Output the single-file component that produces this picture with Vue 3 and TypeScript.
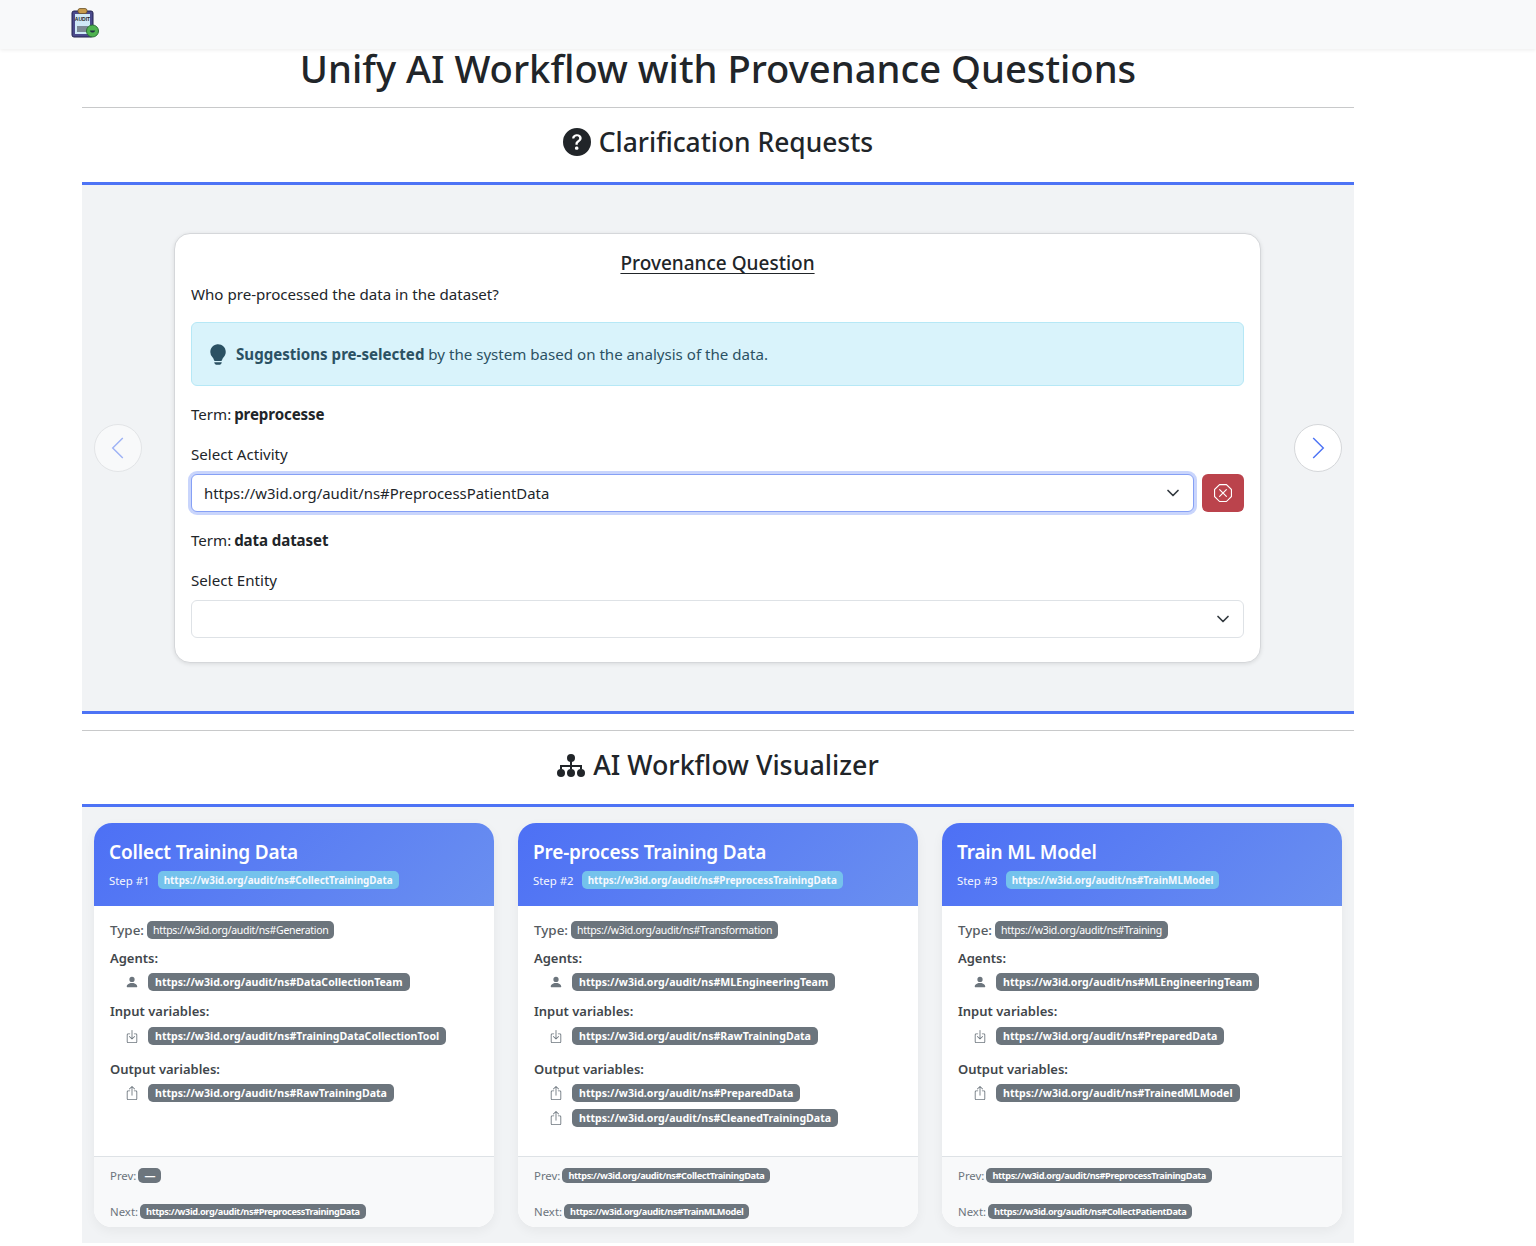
<script setup lang="ts">
type Step = {
  title: string
  uri: string
  type: string
  agents: string[]
  inputs: string[]
  outputs: string[]
  prev: string
  next: string
}

const ns = 'https://w3id.org/audit/ns#'

const steps: Step[] = [
  {
    title: 'Collect Training Data',
    uri: 'CollectTrainingData',
    type: 'Generation',
    agents: ['DataCollectionTeam'],
    inputs: ['TrainingDataCollectionTool'],
    outputs: ['RawTrainingData'],
    prev: '',
    next: 'PreprocessTrainingData',
  },
  {
    title: 'Pre-process Training Data',
    uri: 'PreprocessTrainingData',
    type: 'Transformation',
    agents: ['MLEngineeringTeam'],
    inputs: ['RawTrainingData'],
    outputs: ['PreparedData', 'CleanedTrainingData'],
    prev: 'CollectTrainingData',
    next: 'TrainMLModel',
  },
  {
    title: 'Train ML Model',
    uri: 'TrainMLModel',
    type: 'Training',
    agents: ['MLEngineeringTeam'],
    inputs: ['PreparedData'],
    outputs: ['TrainedMLModel'],
    prev: 'PreprocessTrainingData',
    next: 'CollectPatientData',
  },
]
</script>

<template>
  <nav class="navbar">
    <svg class="logo" viewBox="0 0 28 31" width="28" height="31">
      <rect x="1" y="4" width="21" height="26" rx="2" fill="#4b4a8c" stroke="#23234f" />
      <rect x="4" y="7" width="15" height="20" fill="#cfe9f7" />
      <rect x="7" y="1.500" width="9" height="5" rx="2" fill="#c79a4b" stroke="#6b5428" stroke-width="0.800" />
      <text x="11.500" y="14" font-size="5" font-weight="700" text-anchor="middle" fill="#222" font-family="Liberation Sans, sans-serif">AUDIT</text>
      <rect x="6" y="19" width="11" height="6" fill="#7d8a96" />
      <circle cx="21.500" cy="24" r="6" fill="#4fb34f" stroke="#2a6f35" />
      <path d="M18.800 23.500c.8 2.800 4.600 2.800 5.400 0z" fill="#234" />
    </svg>
  </nav>

  <main class="page">
    <h1 class="title">Unify AI Workflow with Provenance Questions</h1>
    <hr class="rule rule-first" />

    <h2 class="heading heading-first">
      <svg width="28" height="28" viewBox="0 0 16 16" fill="currentColor">
        <path d="M16 8A8 8 0 1 1 0 8a8 8 0 0 1 16 0zM5.496 6.033h.825c.138 0 .248-.113.266-.25.09-.656.54-1.134 1.342-1.134.686 0 1.314.343 1.314 1.168 0 .635-.374.927-.965 1.371-.673.489-1.206 1.06-1.168 1.987l.003.217a.25.25 0 0 0 .25.246h.811a.25.25 0 0 0 .25-.25v-.105c0-.718.273-.927 1.01-1.486.609-.463 1.244-.977 1.244-2.056 0-1.511-1.276-2.241-2.673-2.241-1.267 0-2.655.59-2.75 2.286a.237.237 0 0 0 .241.247zm2.325 6.443c.61 0 1.029-.394 1.029-.927 0-.552-.42-.94-1.029-.94-.584 0-1.009.388-1.009.94 0 .533.425.927 1.01.927z" />
      </svg>
      Clarification Requests
    </h2>

    <section class="carousel">
      <button class="arrow arrow-off" type="button" aria-label="Previous">
        <svg width="24" height="24" viewBox="0 0 24 24" fill="none" stroke="#4d73f5" stroke-width="1.500">
          <path d="M17 1.500 6.500 12 17 22.500" transform="scale(0.96) translate(0.500 0.500)" />
        </svg>
      </button>

      <div class="question">
        <h3 class="question-title">Provenance Question</h3>
        <p class="question-text">Who pre-processed the data in the dataset?</p>

        <div class="alert">
          <svg width="18" height="21" viewBox="1 0 14 16" fill="currentColor">
            <path d="M2 6a6 6 0 1 1 10.174 4.31c-.203.196-.359.4-.453.619l-.762 1.769A.5.5 0 0 1 10.500 13h-5a.5.5 0 0 1-.46-.302l-.761-1.77a1.964 1.964 0 0 0-.453-.618A5.984 5.984 0 0 1 2 6zm3 8.500a.5.5 0 0 1 .5-.5h5a.5.5 0 0 1 0 1l-.224.447a1 1 0 0 1-.894.553H6.618a1 1 0 0 1-.894-.553L5.500 15a.5.5 0 0 1-.5-.5z" />
          </svg>
          <span><strong>Suggestions pre-selected</strong> by the system based on the analysis of the data.</span>
        </div>

        <p class="term">Term: <strong>preprocesse</strong></p>
        <p class="field-label">Select Activity</p>
        <div class="select-row">
          <div class="select select-focus">
            <span>https://w3id.org/audit/ns#PreprocessPatientData</span>
            <svg width="16" height="16" viewBox="0 0 16 16" fill="none" stroke="#343a40" stroke-width="1.700" stroke-linecap="round" stroke-linejoin="round">
              <path d="m3 5.500 5 5 5-5" />
            </svg>
          </div>
          <button class="clear" type="button" aria-label="Clear">
            <svg width="18" height="18" viewBox="0 0 16 16" fill="currentColor">
              <path d="M4.540.146A.5.5 0 0 1 4.893 0h6.214a.5.5 0 0 1 .353.146l4.394 4.394a.5.5 0 0 1 .146.353v6.214a.5.5 0 0 1-.146.353l-4.394 4.394a.5.5 0 0 1-.353.146H4.893a.5.5 0 0 1-.353-.146L.146 11.460A.5.5 0 0 1 0 11.107V4.893a.5.5 0 0 1 .146-.353L4.540.146zM5.100 1 1 5.100v5.800L5.100 15h5.800l4.100-4.100V5.100L10.900 1H5.100z" />
              <path d="M4.646 4.646a.5.5 0 0 1 .708 0L8 7.293l2.646-2.647a.5.5 0 0 1 .708.708L8.707 8l2.647 2.646a.5.5 0 0 1-.708.708L8 8.707l-2.646 2.647a.5.5 0 0 1-.708-.708L7.293 8 4.646 5.354a.5.5 0 0 1 0-.708z" />
            </svg>
          </button>
        </div>

        <p class="term">Term: <strong>data dataset</strong></p>
        <p class="field-label">Select Entity</p>
        <div class="select">
          <span></span>
          <svg width="16" height="16" viewBox="0 0 16 16" fill="none" stroke="#343a40" stroke-width="1.700" stroke-linecap="round" stroke-linejoin="round">
            <path d="m3 5.500 5 5 5-5" />
          </svg>
        </div>
      </div>

      <button class="arrow" type="button" aria-label="Next">
        <svg width="24" height="24" viewBox="0 0 24 24" fill="none" stroke="#4d73f5" stroke-width="1.500">
          <path d="M7 1.500 17.500 12 7 22.500" transform="scale(0.96) translate(0.500 0.500)" />
        </svg>
      </button>
    </section>

    <hr class="rule rule-second" />

    <h2 class="heading heading-second">
      <svg width="28" height="23" viewBox="0 0 28 23" fill="currentColor">
        <circle cx="14" cy="4" r="4" />
        <circle cx="4" cy="19" r="4" />
        <circle cx="14" cy="19" r="4" />
        <circle cx="24" cy="19" r="4" />
        <path d="M13 7h2v4h10v4h-2v-2H15v2h-2v-2H5v2H3v-4h10z" />
      </svg>
      AI Workflow Visualizer
    </h2>

    <section class="workflow">
      <article v-for="(step, i) in steps" :key="step.uri" class="step">
        <header class="step-head">
          <h4 class="step-title">{{ step.title }}</h4>
          <div class="step-sub">
            <span>Step #{{ i + 1 }}</span>
            <span class="pill pill-info">{{ ns + step.uri }}</span>
          </div>
        </header>

        <div class="step-body">
          <div class="type-row">
            <span class="type-label">Type:</span>
            <span class="pill pill-type">{{ ns + step.type }}</span>
          </div>

          <div class="group-label group-agents">Agents:</div>
          <div v-for="a in step.agents" :key="a" class="item">
            <svg width="14" height="14" viewBox="0 0 16 16" fill="#6c757d">
              <path d="M3 14s-1 0-1-1 1-4 6-4 6 3 6 4-1 1-1 1H3Zm5-6a3 3 0 1 0 0-6 3 3 0 0 0 0 6Z" />
            </svg>
            <span class="pill">{{ ns + a }}</span>
          </div>

          <div class="group-label group-inputs">Input variables:</div>
          <div v-for="v in step.inputs" :key="v" class="item item-in">
            <svg width="14" height="14" viewBox="0 0 16 16" fill="#6c757d">
              <path d="M3.500 6a.5.5 0 0 0-.5.5v8a.5.5 0 0 0 .5.5h9a.5.5 0 0 0 .5-.5v-8a.5.5 0 0 0-.5-.5h-2a.5.5 0 0 1 0-1h2A1.500 1.500 0 0 1 14 6.500v8a1.500 1.500 0 0 1-1.500 1.500h-9A1.500 1.500 0 0 1 2 14.500v-8A1.500 1.500 0 0 1 3.500 5h2a.5.5 0 0 1 0 1h-2z" />
              <path d="M7.646 11.854a.5.5 0 0 0 .708 0l3-3a.5.5 0 0 0-.708-.708L8.500 10.293V1.500a.5.5 0 0 0-1 0v8.793L5.354 8.146a.5.5 0 1 0-.708.708l3 3z" />
            </svg>
            <span class="pill">{{ ns + v }}</span>
          </div>

          <div class="group-label group-outputs">Output variables:</div>
          <div v-for="v in step.outputs" :key="v" class="item item-out">
            <svg width="14" height="14" viewBox="0 0 16 16" fill="#6c757d">
              <path d="M3.500 6a.5.5 0 0 0-.5.5v8a.5.5 0 0 0 .5.5h9a.5.5 0 0 0 .5-.5v-8a.5.5 0 0 0-.5-.5h-2a.5.5 0 0 1 0-1h2A1.500 1.500 0 0 1 14 6.500v8a1.500 1.500 0 0 1-1.500 1.500h-9A1.500 1.500 0 0 1 2 14.500v-8A1.500 1.500 0 0 1 3.500 5h2a.5.5 0 0 1 0 1h-2z" />
              <path d="M7.646.146a.5.5 0 0 1 .708 0l3 3a.5.5 0 0 1-.708.708L8.500 1.707V10.500a.5.5 0 0 1-1 0V1.707L5.354 3.854a.5.5 0 1 1-.708-.708l3-3z" />
            </svg>
            <span class="pill">{{ ns + v }}</span>
          </div>
        </div>

        <footer class="step-foot">
          <div class="foot-row">
            <span>Prev:</span>
            <span class="pill pill-small" :class="{ 'pill-empty': !step.prev }">{{ step.prev ? ns + step.prev : '—' }}</span>
          </div>
          <div class="foot-row">
            <span>Next:</span>
            <span class="pill pill-small">{{ ns + step.next }}</span>
          </div>
        </footer>
      </article>
    </section>
  </main>
</template>

<style>
body {
  background: #fff;
}
</style>

<style scoped>
* {
  box-sizing: border-box;
}

.navbar,
.page {
  font-family: 'Noto Sans', 'Open Sans', sans-serif;
  color: #212529;
}

.navbar {
  height: 49px;
  padding: 7px 0 0 71px;
  background: #f8f9fa;
  box-shadow: 0 1px 4px rgba(0, 0, 0, 0.08);
}

.logo {
  display: block;
}

.page {
  width: 1272px;
  margin-left: 82px;
}

.title {
  margin: 0;
  font-size: 38.200px;
  line-height: 38px;
  font-weight: 500;
  text-align: center;
}

.rule {
  margin: 0;
  border: 0;
  border-top: 1px solid #c8c9ca;
}

.rule-first {
  margin-top: 20px;
}

.rule-second {
  margin-top: 16px;
}

.heading {
  display: flex;
  align-items: center;
  justify-content: center;
  gap: 8px;
  margin: 0;
  line-height: 34px;
  font-weight: 500;
  border-bottom: 3px solid #4d73f5;
}

.heading-first {
  padding: 17px 0 23px;
  font-size: 26.400px;
}

.heading-second {
  padding: 17px 0 22px;
  font-size: 26.800px;
}

.carousel {
  display: grid;
  grid-template-columns: 48px 1fr 48px;
  column-gap: 32px;
  align-items: center;
  padding: 48px 12px;
  background: #f1f3f5;
  border-bottom: 3px solid #4d73f5;
}

.arrow {
  display: flex;
  align-items: center;
  justify-content: center;
  width: 48px;
  height: 48px;
  padding: 0;
  background: #fff;
  border: 1px solid #d5d7da;
  border-radius: 50%;
}

.arrow-off {
  opacity: 0.5;
}

.question {
  height: 430px;
  margin-right: 1px;
  padding: 16px 16px 0;
  font-size: 15.100px;
  background: #fff;
  border: 1px solid #d5d7da;
  border-radius: 16px;
  box-shadow: 0 1px 4px rgba(0, 0, 0, 0.1);
}

.question-title {
  margin: 0;
  font-size: 19px;
  line-height: 26px;
  font-weight: 500;
  text-align: center;
  text-decoration: underline;
  text-underline-offset: 3px;
}

.question-text {
  margin: 6px 0 0;
  line-height: 24px;
}

.alert {
  display: flex;
  align-items: center;
  gap: 9px;
  height: 64px;
  margin-top: 16px;
  padding: 0 17px;
  color: #2b5163;
  background: #d9f3fb;
  border: 1px solid #b6e8f6;
  border-radius: 6px;
}

.term {
  margin: 16px 0 0;
  line-height: 24px;
}

.term strong {
  margin-left: -1px;
  letter-spacing: -0.1px;
}

.field-label {
  margin: 16px 0 8px;
  line-height: 24px;
}

.select-row {
  display: flex;
  gap: 8px;
}

.select {
  display: flex;
  flex: 1;
  align-items: center;
  justify-content: space-between;
  height: 38px;
  padding: 0 12px;
  font-size: 14.900px;
  background: #fff;
  border: 1px solid #dee2e6;
  border-radius: 6px;
}

.select-focus {
  border-color: #86a0f5;
  box-shadow: 0 0 0 3px rgba(77, 115, 245, 0.3);
}

.clear {
  display: flex;
  flex: none;
  align-items: center;
  justify-content: center;
  width: 42px;
  height: 38px;
  padding: 0;
  color: #fff;
  background: #bb434c;
  border: 0;
  border-radius: 6px;
}

.workflow {
  display: grid;
  grid-template-columns: repeat(3, 400px);
  column-gap: 24px;
  padding: 16px 12px;
  background: #f1f3f5;
}

.step {
  display: flex;
  flex-direction: column;
  height: 404px;
  overflow: hidden;
  background: #fff;
  border-radius: 18px;
  box-shadow: 0 4px 12px rgba(0, 0, 0, 0.05);
}

.step-head {
  height: 83px;
  padding: 15px 15px 0;
  color: #fff;
  background: linear-gradient(135deg, #4d70f5, #6a8ff0);
}

.step-title {
  margin: 0;
  font-size: 19px;
  line-height: 28px;
  font-weight: 600;
  letter-spacing: -0.16px;
}

.step-sub {
  display: flex;
  align-items: center;
  gap: 9px;
  height: 18px;
  margin-top: 5px;
  font-size: 11.400px;
  line-height: 17px;
  opacity: 0.95;
}

.pill {
  display: inline-block;
  height: 18px;
  padding: 0 7px;
  font-size: 10.600px;
  line-height: 18px;
  font-weight: 700;
  color: #fff;
  white-space: nowrap;
  background: #6c757d;
  border-radius: 5px;
}

.pill-info {
  padding: 0 6px;
  margin-left: -1px;
  font-size: 9.900px;
  background: #76c6ec;
}

.pill-type {
  padding: 0 6px;
  margin-left: -1px;
  font-size: 10.500px;
  font-weight: 400;
  letter-spacing: -0.3px;
}

.pill-small {
  height: 15px;
  padding: 0 6px;
  margin-left: -1px;
  font-size: 9.200px;
  line-height: 15px;
  letter-spacing: -0.38px;
}

.pill-empty {
  min-width: 21px;
  font-size: 11px;
  text-align: center;
}

.step-body {
  flex: 1;
  padding: 15px 15px 0 16px;
  color: #555b61;
}

.type-row {
  display: flex;
  align-items: center;
  gap: 4px;
  height: 18px;
  font-size: 13.400px;
  font-weight: 500;
}

.group-label {
  height: 20px;
  font-size: 13px;
  line-height: 20px;
  font-weight: 600;
  color: #41464b;
}

.group-agents {
  margin-top: 9px;
}

.group-inputs {
  margin-top: 10px;
}

.group-outputs {
  margin-top: 14px;
}

.item {
  display: flex;
  align-items: center;
  gap: 9px;
  height: 18px;
  margin-top: 5px;
  padding-left: 15px;
}

.item-in {
  margin-top: 6px;
}

.item-out + .item-out {
  margin-top: 7px;
}

.step-foot {
  height: 71px;
  padding: 9px 15px 0 16px;
  font-size: 11.400px;
  color: #6c757d;
  background: #f8f9fa;
  border-top: 1px solid #dee2e6;
}

.foot-row {
  display: flex;
  align-items: center;
  gap: 3px;
  height: 18px;
}

.foot-row + .foot-row {
  margin-top: 18px;
}
</style>
